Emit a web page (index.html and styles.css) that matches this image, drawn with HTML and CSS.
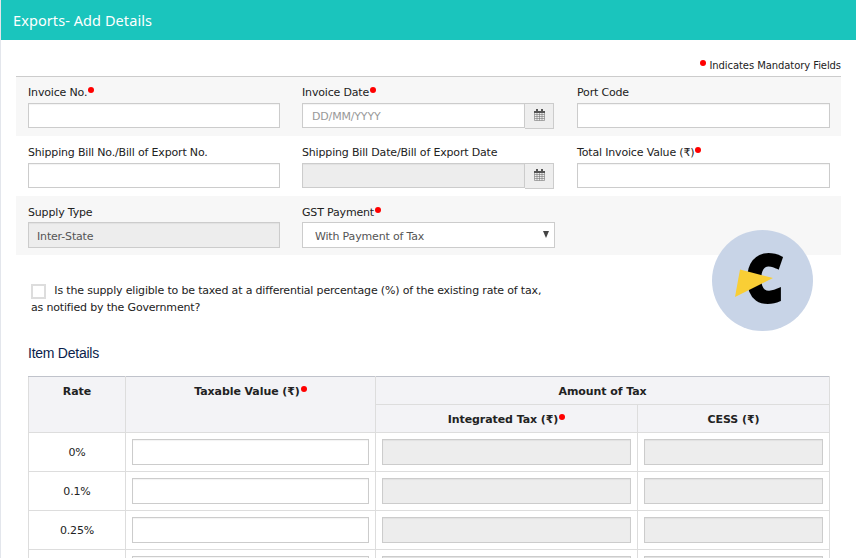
FILE: index.html
```
<!DOCTYPE html>
<html lang="en">
  <head>
    <meta charset="UTF-8" />
    <meta name="viewport" content="width=device-width, initial-scale=1.0" />
    <title>Exports- Add Details</title>
    <link rel="stylesheet" href="styles.css">
  </head>
  <body>
    <header class="page-header">
      <h1>Exports- Add Details</h1>
    </header>

    <main class="content">
      <p class="mandatory-note"><span class="req"></span>Indicates Mandatory Fields</p>

      <form id="exportForm">
        <div class="form-row shaded first">
          <div class="field">
            <label for="invoiceNo">Invoice No.<span class="req"></span></label>
            <input type="text" id="invoiceNo" name="invoiceNo" />
          </div>
          <div class="field">
            <label for="invoiceDate">Invoice Date<span class="req"></span></label>
            <div class="date-group">
              <input type="text" id="invoiceDate" name="invoiceDate" placeholder="DD/MM/YYYY" />
              <button type="button" aria-label="Pick date">
                <svg class="calendar" viewBox="0 0 11 12">
                  <path d="M.5 2.5h10v9h-10zM.5 5.5h10M.5 7.5h10M.5 9.5h10M3 4v7.500M5.500 4v7.500M8 4v7.500" />
                  <path class="calendar-top" d="M0 2h11v2H0zM2 0h2v3H2zM7 0h2v3H7z" />
                </svg>
              </button>
            </div>
          </div>
          <div class="field">
            <label for="portCode">Port Code</label>
            <input type="text" id="portCode" name="portCode" />
          </div>
        </div>

        <div class="form-row">
          <div class="field">
            <label for="billNo">Shipping Bill No./Bill of Export No.</label>
            <input type="text" id="billNo" name="billNo" />
          </div>
          <div class="field">
            <label for="billDate">Shipping Bill Date/Bill of Export Date</label>
            <div class="date-group">
              <input type="text" id="billDate" name="billDate" disabled />
              <button type="button" aria-label="Pick date">
                <svg class="calendar" viewBox="0 0 11 12">
                  <path d="M.5 2.5h10v9h-10zM.5 5.5h10M.5 7.5h10M.5 9.5h10M3 4v7.500M5.500 4v7.500M8 4v7.500" />
                  <path class="calendar-top" d="M0 2h11v2H0zM2 0h2v3H2zM7 0h2v3H7z" />
                </svg>
              </button>
            </div>
          </div>
          <div class="field">
            <label for="totalValue">Total Invoice Value (₹)<span class="req"></span></label>
            <input type="text" id="totalValue" name="totalValue" />
          </div>
        </div>

        <div class="form-row shaded last">
          <div class="field">
            <label for="supplyType">Supply Type</label>
            <input type="text" id="supplyType" name="supplyType" value="Inter-State" disabled />
          </div>
          <div class="field">
            <label for="gstPayment">GST Payment<span class="req"></span></label>
            <div class="select-wrap">
              <select id="gstPayment" name="gstPayment">
                <option>With Payment of Tax</option>
                <option>Without Payment of Tax</option>
              </select>
              <svg class="arrow" viewBox="0 0 6 7"><path d="M0 0h6L3 7z" /></svg>
            </div>
          </div>
        </div>

        <label class="differential">
          <input type="checkbox" name="differential" />
          <span>Is the supply eligible to be taxed at a differential percentage (%) of the existing rate of tax,</span><br />
          <span>as notified by the Government?</span>
        </label>

        <h2>Item Details</h2>
        <table class="items">
          <colgroup>
            <col class="col-rate" />
            <col class="col-value" />
            <col class="col-tax" />
            <col class="col-cess" />
          </colgroup>
          <thead>
            <tr>
              <th rowspan="2">Rate</th>
              <th rowspan="2">Taxable Value (₹)<span class="req"></span></th>
              <th colspan="2">Amount of Tax</th>
            </tr>
            <tr>
              <th>Integrated Tax (₹)<span class="req"></span></th>
              <th>CESS (₹)</th>
            </tr>
          </thead>
          <tbody>
            <tr>
              <td>0%</td>
              <td><input type="text" /></td>
              <td><input type="text" disabled /></td>
              <td><input type="text" disabled /></td>
            </tr>
            <tr>
              <td>0.1%</td>
              <td><input type="text" /></td>
              <td><input type="text" disabled /></td>
              <td><input type="text" disabled /></td>
            </tr>
            <tr>
              <td>0.25%</td>
              <td><input type="text" /></td>
              <td><input type="text" disabled /></td>
              <td><input type="text" disabled /></td>
            </tr>
            <tr>
              <td></td>
              <td><input type="text" /></td>
              <td><input type="text" disabled /></td>
              <td><input type="text" disabled /></td>
            </tr>
          </tbody>
        </table>
      </form>
    </main>

    <svg class="badge" viewBox="0 0 101 101">
      <circle cx="50.5" cy="50.5" r="50.5" fill="#c8d4e7" />
      <text class="badge-letter" transform="translate(33.500 71.800) scale(.88 1)">C</text>
      <path d="M28 39.500L61 48L23 67z" fill="#f9ce35" />
    </svg>
  </body>
</html>
```

FILE: styles.css
```
:root {
  --teal: #1ac5bd;
  --text: #222;
  --shade: #f7f7f7;
  --input-border: #ccc;
  --disabled-bg: #ededed;
  --line: #ddd;
}

* {
  box-sizing: border-box;
}

body {
  margin: 0;
  height: 558px;
  overflow: hidden;
  border-left: 1px solid #e3e6ec;
  background: #fff;
  color: var(--text);
  font-family: Verdana, "DejaVu Sans", sans-serif;
  font-size: 11px;
  letter-spacing: -0.17px;
}

.page-header {
  height: 40px;
  padding-left: 12px;
  background: var(--teal);
}

h1 {
  margin: 0;
  color: #fff;
  font-family: "Noto Sans", sans-serif;
  font-size: 14.5px;
  font-weight: normal;
  letter-spacing: 0.08px;
  line-height: 41px;
}

.content {
  width: 840px;
  padding: 17px 0 0 15px;
}

.mandatory-note {
  margin: 0;
  height: 19px;
  font-size: 10px;
  letter-spacing: -0.08px;
  line-height: 18px;
  text-align: right;
}

.mandatory-note .req {
  margin-right: 3px;
}

/* red dot for required fields */
.req {
  display: inline-block;
  width: 6px;
  height: 6px;
  margin-left: 1px;
  border-radius: 50%;
  background: #f00;
  vertical-align: 3px;
}

.form-row {
  display: grid;
  grid-template-columns: 252px 253px 253px;
  column-gap: 22px;
  height: 60px;
  padding-left: 12px;
}

.form-row.shaded {
  background: var(--shade);
}

.form-row.first {
  border-top: 1px solid #ccc;
}

.form-row.last {
  height: 59px;
}

.field label {
  display: block;
  height: 27px;
  line-height: 34px;
  white-space: nowrap;
}

.form-row.first label {
  height: 26px;
  line-height: 32px;
}

.form-row.last label {
  height: 26px;
}

input[type="text"],
select {
  display: block;
  width: 100%;
  height: 25px;
  margin: 0;
  padding: 1px 8px 0;
  border: 1px solid var(--input-border);
  border-radius: 0;
  background: #fff;
  box-shadow: inset 0 1px 1px rgba(0, 0, 0, 0.05);
  color: #555;
  font-family: inherit;
  font-size: 11px;
  letter-spacing: inherit;
}

input[type="text"]:disabled {
  background: var(--disabled-bg);
}

input::placeholder {
  color: #999;
}

.form-row.last input,
.form-row.last select,
.items input[type="text"] {
  height: 26px;
}

.form-row.last input,
.form-row.last select {
  padding-top: 2px;
}

.date-group {
  display: flex;
  width: 252px;
}

.date-group input[type="text"] {
  width: 223px;
  padding: 2px 9px 0;
}

.date-group button {
  display: flex;
  justify-content: center;
  width: 29px;
  height: 26px;
  padding: 5px 0 0;
  border: 1px solid var(--input-border);
  border-left: 0;
  background: #eee;
}

.calendar {
  width: 11px;
  height: 12px;
  fill: none;
  stroke: #777;
  stroke-width: 0.6;
}

.calendar-top {
  fill: #555;
  stroke: none;
}

.select-wrap {
  position: relative;
}

select {
  appearance: none;
  padding-left: 12px;
  box-shadow: none;
}

.form-row.last select {
  padding-left: 12px;
}

.arrow {
  position: absolute;
  top: 9px;
  right: 6px;
  width: 6px;
  height: 7px;
  fill: #444;
}

.differential {
  display: block;
  height: 64px;
  margin: 27px 0 0 15px;
  line-height: 17px;
  white-space: nowrap;
}

.differential input {
  appearance: none;
  width: 15px;
  height: 15px;
  margin: 0 5px -3px 0;
  border: 2px solid #ddd;
  vertical-align: -2px;
}

h2 {
  margin: 0 0 0 12px;
  height: 30px;
  color: #0b1e4c;
  font-family: "Liberation Sans", Arial, sans-serif;
  font-size: 14px;
  font-weight: normal;
  letter-spacing: -0.25px;
  line-height: 14px;
}

.items {
  width: 802px;
  margin-left: 12px;
  border-collapse: collapse;
  table-layout: fixed;
}

.col-rate {
  width: 97px;
}

.col-value {
  width: 250px;
}

.col-tax {
  width: 262px;
}

.items th,
.items td {
  border: 1px solid var(--line);
  padding: 0 6px;
}

.items th {
  height: 28px;
  padding-top: 6px;
  background: #f3f3f6;
  letter-spacing: -0.08px;
  line-height: 17px;
  vertical-align: top;
}

.items tr:first-child th {
  border-top-color: #c0c3cb;
}

.items tr:last-child th {
  border-top-color: var(--line);
}

.items td {
  height: 39px;
  text-align: center;
}

.badge {
  position: absolute;
  left: 712px;
  top: 230px;
  width: 101px;
  height: 101px;
}

.badge-letter {
  font-family: "Open Sans", sans-serif;
  font-size: 66px;
  font-weight: 800;
  stroke: #000;
  stroke-width: 3px;
}
```
